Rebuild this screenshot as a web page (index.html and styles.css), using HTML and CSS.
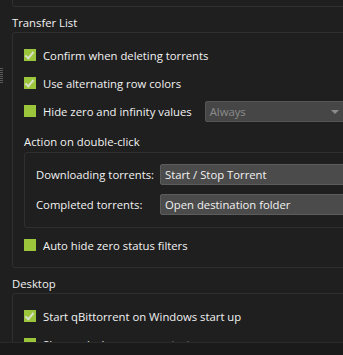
FILE: index.html
```html
<!DOCTYPE html>
<html>
<head>
    <title>Options - Behavior</title>
    <link rel="stylesheet" href="styles.css">
</head>
<body>
    <div class="page">
        <div class="splitter"><div class="grip"></div></div>

        <div class="content">
            <div class="group prev"></div>

            <div class="group-title">Transfer List</div>
            <div class="group transfer">
                <label class="check-row"><span class="box checked"></span>Confirm when deleting torrents</label>
                <label class="check-row"><span class="box checked"></span>Use alternating row colors</label>
                <div class="check-row">
                    <span class="box"></span>Hide zero and infinity values
                    <div class="combo disabled hide-combo">Always<span class="arrow"></span></div>
                </div>

                <div class="group-title sub">Action on double-click</div>
                <div class="group action">
                    <div class="field">
                        <span class="field-label">Downloading torrents:</span>
                        <div class="combo">Start / Stop Torrent</div>
                    </div>
                    <div class="field">
                        <span class="field-label">Completed torrents:</span>
                        <div class="combo">Open destination folder</div>
                    </div>
                </div>

                <label class="check-row"><span class="box"></span>Auto hide zero status filters</label>
            </div>

            <div class="group-title desk-title">Desktop</div>
            <div class="group desktop">
                <label class="check-row"><span class="box checked"></span>Start qBittorrent on Windows start up</label>
                <label class="check-row"><span class="box"></span>Show splash screen on start up</label>
            </div>
        </div>
    </div>
    <div class="footer"></div>
</body>
</html>
```

FILE: styles.css
```css
body {
    margin: 0;
    padding: 0;
    width: 343px;
    height: 355px;
    overflow: hidden;
    background: #1f1f1f;
    color: #f2f2f2;
    font-family: "Open Sans", "Noto Sans", sans-serif;
    font-size: 11.3px;
}

.page {
    display: flex;
    height: 342px;
    overflow: hidden;
}

.splitter {
    width: 12px;
    flex: none;
}

.grip {
    margin-top: 68px;
    width: 3px;
    height: 16px;
    background: repeating-linear-gradient(to bottom, #5a5a5a 0 1px, transparent 1px 2px);
}

.content {
    width: 360px;
    flex: none;
}

.group {
    border: 1px solid #2f2f2f;
    border-radius: 3px;
}

.prev {
    height: 7px;
    border-top: none;
    border-radius: 0 0 3px 3px;
    margin-top: -1px;
}

.group-title {
    height: 16px;
    line-height: 16px;
    margin-top: 8px;
    margin-bottom: 1px;
    font-size: 11.3px;
}

.transfer {
    padding: 11px 0 11px 11px;
}

.check-row {
    display: flex;
    align-items: center;
    height: 22px;
    margin-bottom: 6px;
    white-space: nowrap;
}

.check-row:last-child {
    margin-bottom: 0;
}

.box {
    width: 12px;
    height: 12px;
    margin-right: 7px;
    background: #9bc53a;
    flex: none;
    position: relative;
}

.box.checked::after {
    content: "";
    position: absolute;
    left: 3px;
    top: 1px;
    width: 3px;
    height: 7px;
    border: solid #d6dfc8;
    border-width: 0 2px 2px 0;
    transform: rotate(40deg);
}

.combo {
    height: 19px;
    line-height: 19px;
    background: #4b4b4b;
    border: 1px solid #5c5c5c;
    border-radius: 2px;
    padding-left: 4px;
    color: #f2f2f2;
    white-space: nowrap;
    font-size: 11.3px;
}

.combo.disabled {
    color: #8c8c8c;
    background: #464646;
    border-color: #555555;
    position: relative;
}

.hide-combo {
    margin-left: 13px;
    width: 160px;
}

.arrow {
    position: absolute;
    left: 125px;
    top: 8px;
    border-left: 4px solid transparent;
    border-right: 4px solid transparent;
    border-top: 4px solid #8c8c8c;
}

.group-title.sub {
    margin-top: 12px;
    margin-bottom: 2px;
}

.action {
    padding: 11px 0 12px 11px;
    margin-bottom: 6px;
    display: flex;
    flex-direction: column;
    gap: 9px;
}

.field {
    display: grid;
    grid-template-columns: 124px 200px;
    align-items: center;
    white-space: nowrap;
}

.desk-title {
    margin-top: 8px;
    margin-bottom: 1px;
}

.desktop {
    padding: 11px 0 11px 11px;
}

.footer {
    height: 12px;
    background: #1a1a1a;
    border-top: 1px solid #2a2a2a;
}
```
